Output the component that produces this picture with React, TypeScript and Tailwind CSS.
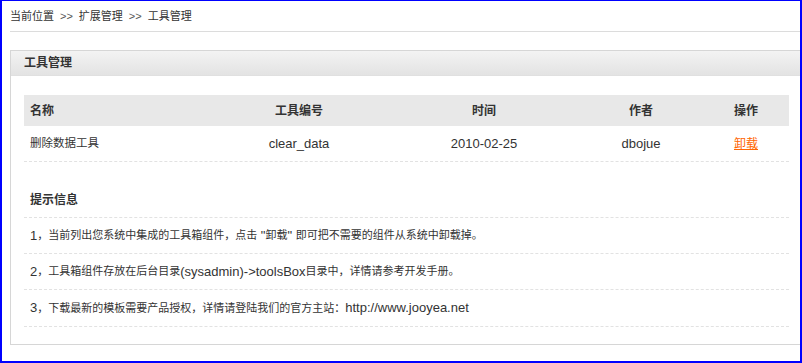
import React from 'react';

const tools = [
  { name: '删除数据工具', code: 'clear_data', date: '2010-02-25', author: 'dbojue' },
];

const cols = 'grid grid-cols-[185px_180px_190px_124px_86px]';

const App: React.FC = () => {
  return (
    <div
      className="w-[802px] h-[363px] bg-white border-[#0000ff] border-l-2 border-r-2 border-t border-b-2 text-[12px] text-[#333]"
      style={{ fontFamily: '"Liberation Sans", "Noto Sans CJK SC", sans-serif' }}
    >
      {/* Breadcrumb */}
      <div className="ml-2 h-[31px] flex items-center border-b border-[#dcdcdc] text-[11px]">
        <span>当前位置</span>
        <span className="mx-[6px] text-[#555]">&gt;&gt;</span>
        <span>扩展管理</span>
        <span className="mx-[6px] text-[#555]">&gt;&gt;</span>
        <span>工具管理</span>
      </div>

      {/* Panel */}
      <div className="ml-2 mt-[18px] border border-r-0 border-[#d6d6d6]">
        <div className="h-[25px] flex items-center pl-[13px] font-bold bg-gradient-to-b from-[#f3f3f3] to-[#e3e3e3] border-b border-[#e0e0e0]">
          工具管理
        </div>

        <div className="pl-[13px] pr-[11px] pt-[19px] pb-[17px]">
          {/* Tools table */}
          <div className={`${cols} h-[31px] items-center bg-[#e8e8e8] font-bold`}>
            <div className="pl-[6px]">名称</div>
            <div className="text-center">工具编号</div>
            <div className="text-center">时间</div>
            <div className="text-center">作者</div>
            <div className="text-center">操作</div>
          </div>
          {tools.map((t) => (
            <div key={t.code} className={`${cols} h-[36px] items-center border-b border-dashed border-[#e2e2e2]`}>
              <div className="pl-[6px] text-[11.5px]">{t.name}</div>
              <div className="text-center text-[13px]">{t.code}</div>
              <div className="text-center text-[13px]">{t.date}</div>
              <div className="text-center text-[13px]">{t.author}</div>
              <div className="text-center">
                <a href="#" className="text-[#ff6600] underline">卸载</a>
              </div>
            </div>
          ))}

          {/* Tips */}
          <div className="mt-[20px]">
            <div className="h-[36px] flex items-center pl-[6px] font-bold border-b border-dashed border-[#e2e2e2]">
              提示信息
            </div>
            <div className="h-[36px] flex items-center pl-[6px] text-[11px] border-b border-dashed border-[#e2e2e2]">
              <span className="text-[13px]">1</span>，当前列出您系统中集成的工具箱组件，点击 <span className="text-[13px]">&nbsp;"</span>卸载<span className="text-[13px]">"&nbsp;</span> 即可把不需要的组件从系统中卸载掉。
            </div>
            <div className="h-[36px] flex items-center pl-[6px] text-[11px] border-b border-dashed border-[#e2e2e2]">
              <span className="text-[13px]">2</span>，工具箱组件存放在后台目录<span className="text-[13px]">(sysadmin)-&gt;toolsBox</span>目录中，详情请参考开发手册。
            </div>
            <div className="h-[37px] flex items-center pl-[6px] text-[11px] border-b border-dashed border-[#e2e2e2]">
              <span className="text-[13px]">3</span>，下载最新的模板需要产品授权，详情请登陆我们的官方主站：<span className="text-[13px]">http://www.jooyea.net</span>
            </div>
          </div>
        </div>
      </div>
    </div>
  );
};

export default App;
